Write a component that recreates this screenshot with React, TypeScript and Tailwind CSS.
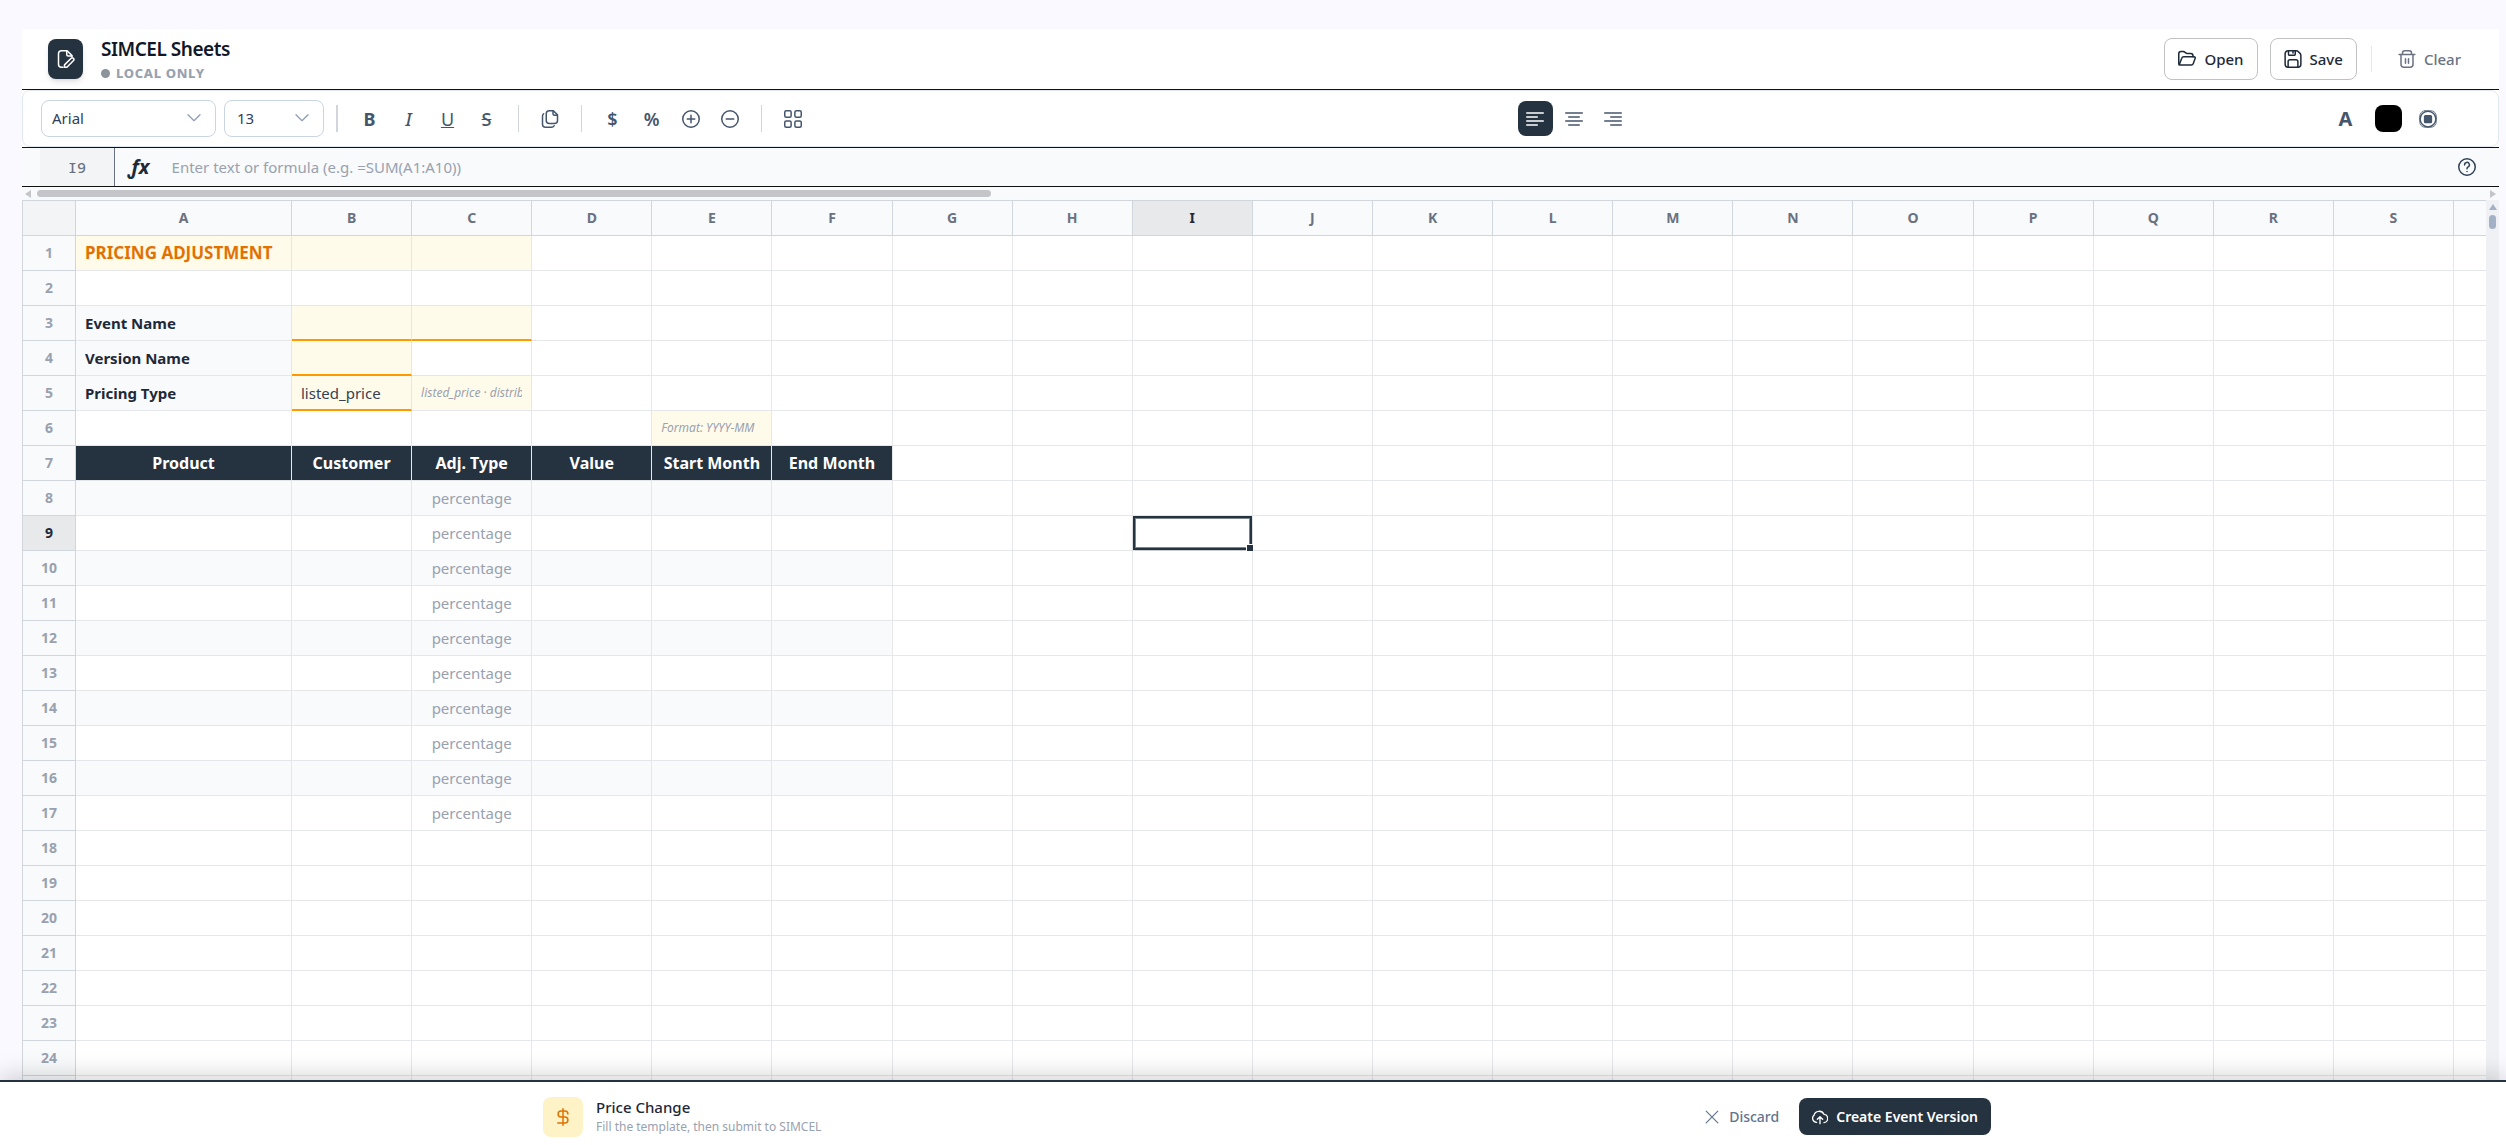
import React from 'react';

interface IconProps {
  className?: string;
  children: React.ReactNode;
}

const Icon: React.FC<IconProps> = ({ className = 'size-[18px]', children }) => (
  <svg
    viewBox="0 0 24 24"
    fill="none"
    stroke="currentColor"
    strokeWidth="2"
    strokeLinecap="round"
    strokeLinejoin="round"
    className={`shrink-0 ${className}`}
    aria-hidden="true"
  >
    {children}
  </svg>
);

const FileEditIcon = () => (
  <Icon>
    <path d="M8 23H6a4 4 0 0 1-4-4V5a4 4 0 0 1 4-4h7.5L20 7.5V9" />
    <path d="M13 1.5V6a2 2 0 0 0 2 2h4.5" />
    <path d="M10 23v-3.2l8.9-8.9a2.3 2.3 0 0 1 3.2 3.2L13.2 23z" />
  </Icon>
);

const FolderOpenIcon = () => (
  <Icon>
    <path d="M1 18V5a3 3 0 0 1 3-3h3.5l4 2.5H17a3 3 0 0 1 3 3V9" />
    <path d="M1.5 20 5 11a3 3 0 0 1 2.7-2H21.5a1.5 1.5 0 0 1 1.4 2l-2.5 7a3 3 0 0 1-2.8 2H2.5A1.5 1.5 0 0 1 1 18.5" />
  </Icon>
);

const SaveIcon = () => (
  <Icon>
    <path d="M1.5 5a4 4 0 0 1 4-4h10.8a4 4 0 0 1 2.8 1.2l2.3 2.3a4 4 0 0 1 1.1 2.7V19a4 4 0 0 1-4 4h-13a4 4 0 0 1-4-4z" />
    <path d="M6 1v4.5A1.5 1.5 0 0 0 7.5 7h6A1.5 1.5 0 0 0 15 5.5V1M12 2v2" />
    <path d="M5.5 23v-7.5A2.5 2.5 0 0 1 8 13h8a2.5 2.5 0 0 1 2.5 2.5V23" />
  </Icon>
);

const TrashIcon = () => (
  <Icon>
    <path d="M1.5 6h21M4 6v13a4 4 0 0 0 4 4h8a4 4 0 0 0 4-4V6M6 6V4a3 3 0 0 1 3-3h6a3 3 0 0 1 3 3v2M10 11.5v6M14 11.5v6" />
  </Icon>
);

const CopyIcon = () => (
  <Icon>
    <path d="M11 1h5.5L22 6.5V14a4 4 0 0 1-4 4h-7a4 4 0 0 1-4-4V5a4 4 0 0 1 4-4z" />
    <path d="M16 1.5V5a2 2 0 0 0 2 2h3.5M3.5 5A4 4 0 0 0 2 8v11a4 4 0 0 0 4 4h8a4 4 0 0 0 3.5-2" />
  </Icon>
);

const PlusCircleIcon = () => (
  <Icon>
    <circle cx="12" cy="12" r="11" />
    <path d="M12 7v10M7 12h10" />
  </Icon>
);

const MinusCircleIcon = () => (
  <Icon>
    <circle cx="12" cy="12" r="11" />
    <path d="M7 12h10" />
  </Icon>
);

const AppsIcon = () => (
  <Icon>
    <rect x="1" y="1" width="8.5" height="8.5" rx="2" />
    <rect x="14.5" y="1" width="8.5" height="8.5" rx="2" />
    <rect x="1" y="14.5" width="8.5" height="8.5" rx="2" />
    <rect x="14.5" y="14.5" width="8.5" height="8.5" rx="2" />
  </Icon>
);

const AlignLeftIcon = () => (
  <Icon>
    <path d="M1 4h22M1 9.3h14M1 14.6h22M1 20h14" />
  </Icon>
);

const AlignCenterIcon = () => (
  <Icon>
    <path d="M1 4h22M5 9.3h14M1 14.6h22M5 20h14" />
  </Icon>
);

const AlignRightIcon = () => (
  <Icon>
    <path d="M1 4h22M9 9.3h14M1 14.6h22M9 20h14" />
  </Icon>
);

const FillIcon = () => (
  <Icon>
    <rect x="1" y="1" width="22" height="22" rx="7" strokeWidth="1" />
    <circle cx="12" cy="12" r="10.5" />
    <rect x="7.5" y="7.5" width="9" height="9" rx="1" fill="currentColor" />
  </Icon>
);

const HelpIcon = () => (
  <Icon>
    <circle cx="12" cy="12" r="11" />
    <path d="M8.8 9.2a3.2 3.2 0 1 1 4.8 2.6c-1 .6-1.6 1.2-1.6 2.5M12 18v.1" />
  </Icon>
);

const ChevronIcon = () => (
  <Icon className="pointer-events-none absolute top-2.5 right-3.5 size-4 text-slate-400">
    <path d="M3 7l9 9 9-9" />
  </Icon>
);

const CloseIcon = () => (
  <Icon className="size-3.5">
    <path d="M2 2l20 20M22 2 2 22" />
  </Icon>
);

const DollarIcon = () => (
  <Icon>
    <path d="M12 1v22M18.5 8a4 4 0 0 0-4-4h-5a4 4 0 0 0 0 8h5a4 4 0 0 1 0 8H5" />
  </Icon>
);

const CloudUploadIcon = () => (
  <Icon className="size-4">
    <path d="M7 20a6 6 0 0 1-4-10.5A8 8 0 0 1 18 8a6.3 6.3 0 0 1 0 12.5" />
    <path d="M12 22V12M8 15.5l4-4 4 4" />
  </Icon>
);

const Divider = () => <span className="mr-[9px] ml-2.5 h-[27px] w-px bg-gray-300" />;

interface ToolButtonProps {
  label: string;
  active?: boolean;
  children: React.ReactNode;
}

const ToolButton: React.FC<ToolButtonProps> = ({ label, active, children }) => (
  <button
    type="button"
    aria-label={label}
    className={`flex size-[35px] items-center justify-center rounded-lg text-lg ${
      active ? 'bg-[#253341] text-white' : 'text-slate-600'
    }`}
  >
    {children}
  </button>
);

const columns = 'ABCDEFGHIJKLMNOPQRS'.split('');
const rows = Array.from({ length: 25 }, (_, i) => i + 1);

const selected = { col: 'I', row: 9 };

const label = 'bg-slate-50 font-bold text-gray-800';
const input = 'bg-amber-50 border-b-2 border-b-amber-500';
const head = 'bg-[#253341] text-center text-base font-bold text-white';
const hint = 'bg-amber-50 text-xs text-gray-400 italic';

interface Cell {
  text?: string;
  style: string;
}

const cells: Record<string, Cell> = {
  A1: { text: 'PRICING ADJUSTMENT', style: 'bg-amber-50 text-[17px] font-bold text-amber-600' },
  B1: { style: 'bg-amber-50' },
  C1: { style: 'bg-amber-50' },
  A3: { text: 'Event Name', style: label },
  B3: { style: input },
  C3: { style: input },
  A4: { text: 'Version Name', style: label },
  B4: { style: input },
  A5: { text: 'Pricing Type', style: label },
  B5: { text: 'listed_price', style: input },
  C5: { text: 'listed_price · distributor_price', style: hint },
  E6: { text: 'Format: YYYY-MM', style: hint },
  A7: { text: 'Product', style: head },
  B7: { text: 'Customer', style: head },
  C7: { text: 'Adj. Type', style: head },
  D7: { text: 'Value', style: head },
  E7: { text: 'Start Month', style: head },
  F7: { text: 'End Month', style: head }
};

const getCell = (col: string, row: number): Cell => {
  const cell = cells[`${col}${row}`];
  if (cell) return cell;
  if (row >= 8 && row <= 17 && col <= 'F') {
    const stripe = row % 2 === 0 ? 'bg-slate-50' : 'bg-white';
    return col === 'C'
      ? { text: 'percentage', style: `${stripe} text-center text-gray-400` }
      : { style: stripe };
  }
  return { style: 'bg-white' };
};

const Header = () => (
  <header className="flex h-[61px] shrink-0 items-center justify-between border-b border-[#111111] bg-white pr-6 pl-[26px]">
    <div className="flex items-center gap-[18px]">
      <div className="flex h-10 w-[35px] items-center justify-center rounded-lg bg-[#253341] text-white shadow-md">
        <FileEditIcon />
      </div>
      <div className="pt-1">
        <h1 className="text-[19px] leading-6 font-semibold tracking-tight text-gray-900">SIMCEL Sheets</h1>
        <p className="flex items-center gap-1.5 text-[13px] leading-6 font-extrabold tracking-wider text-gray-400">
          <span className="size-[9px] rounded-full bg-[#8b9499]" />
          LOCAL ONLY
        </p>
      </div>
    </div>
    <div className="flex items-center text-[15px] font-medium text-gray-800">
      <button type="button" className="flex h-[42px] items-center gap-2 rounded-lg border border-[#bfc1c5] px-[13px]">
        <FolderOpenIcon />
        Open
      </button>
      <button type="button" className="ml-3 flex h-[42px] items-center gap-2 rounded-lg border border-[#bfc1c5] px-[13px]">
        <SaveIcon />
        Save
      </button>
      <span className="ml-3.5 h-[26px] w-px bg-gray-200" />
      <button type="button" className="ml-3 flex h-[42px] items-center gap-2 px-3.5 text-gray-500">
        <TrashIcon />
        Clear
      </button>
    </div>
  </header>
);

const Toolbar = () => (
  <div className="h-[58px] shrink-0 border-b border-[#111111] bg-white">
    <div className="flex h-full items-center justify-between rounded-lg border border-slate-200 pr-[53px] pl-[18px]">
      <div className="flex items-center gap-1">
        <div className="relative mr-1 w-[175px]">
          <select
            aria-label="Font"
            className="h-[37px] w-full appearance-none rounded-lg border border-slate-300 bg-white px-2.5 text-[15px] text-slate-700"
          >
            <option>Arial</option>
          </select>
          <ChevronIcon />
        </div>
        <div className="relative w-[100px]">
          <select
            aria-label="Font size"
            className="h-[37px] w-full appearance-none rounded-lg border border-slate-300 bg-white px-3 text-[15px] text-slate-700"
          >
            <option>13</option>
          </select>
          <ChevronIcon />
        </div>
        <span className="mr-2.5 ml-2 h-[27px] w-0.5 bg-gray-300" />
        <ToolButton label="Bold">
          <span className="font-bold">B</span>
        </ToolButton>
        <ToolButton label="Italic">
          <span className="font-medium italic">I</span>
        </ToolButton>
        <ToolButton label="Underline">
          <span className="underline">U</span>
        </ToolButton>
        <ToolButton label="Strikethrough">
          <span className="font-medium line-through">S</span>
        </ToolButton>
        <Divider />
        <ToolButton label="Copy">
          <CopyIcon />
        </ToolButton>
        <Divider />
        <ToolButton label="Currency">
          <span className="font-semibold">$</span>
        </ToolButton>
        <ToolButton label="Percent">
          <span className="font-semibold">%</span>
        </ToolButton>
        <ToolButton label="More decimals">
          <PlusCircleIcon />
        </ToolButton>
        <ToolButton label="Fewer decimals">
          <MinusCircleIcon />
        </ToolButton>
        <Divider />
        <ToolButton label="Merge cells">
          <AppsIcon />
        </ToolButton>
      </div>
      <div className="ml-2.5 flex items-center gap-1">
        <ToolButton label="Align left" active>
          <AlignLeftIcon />
        </ToolButton>
        <ToolButton label="Align center">
          <AlignCenterIcon />
        </ToolButton>
        <ToolButton label="Align right">
          <AlignRightIcon />
        </ToolButton>
      </div>
      <div className="flex items-center gap-2">
        <ToolButton label="Text color">
          <span className="text-xl font-bold">A</span>
        </ToolButton>
        <button type="button" aria-label="Color swatch" className="ml-1 size-[27px] rounded-lg bg-black" />
        <ToolButton label="Fill color">
          <FillIcon />
        </ToolButton>
      </div>
    </div>
  </div>
);

const FormulaBar = () => (
  <div className="flex h-[39px] shrink-0 items-center border-b border-[#111111] bg-slate-50 pr-[23px] pl-[18px]">
    <div className="flex h-full w-[75px] items-center justify-center border-r border-gray-500 bg-gray-100 font-['Noto_Sans_Mono','DejaVu_Sans_Mono',monospace] text-[15px] font-medium text-gray-500">
      I9
    </div>
    <span className="ml-3.5 text-xl font-bold text-gray-800 italic">ƒx</span>
    <input
      type="text"
      aria-label="Formula"
      placeholder="Enter text or formula (e.g. =SUM(A1:A10))"
      className="ml-[22px] h-full flex-1 bg-transparent text-[15px] outline-none placeholder:text-gray-400"
    />
    <button type="button" aria-label="Help" className="text-slate-700">
      <HelpIcon />
    </button>
  </div>
);

const HorizontalScroll = () => (
  <div className="flex h-[13px] shrink-0 items-center justify-between bg-slate-50 px-[3px]">
    <svg viewBox="0 0 6 8" className="h-2 w-1.5 fill-[#c4c5c8]">
      <path d="M6 0v8L0 4z" />
    </svg>
    <div className="mx-1.5 flex-1">
      <div className="h-[7px] w-[39%] rounded-full bg-[#c4c5c8]" />
    </div>
    <svg viewBox="0 0 6 8" className="h-2 w-1.5 fill-[#c4c5c8]">
      <path d="M0 0v8l6-4z" />
    </svg>
  </div>
);

const VerticalScroll = () => (
  <div className="flex w-[13px] shrink-0 flex-col items-center gap-[5px] bg-[#eff1f4] pt-1">
    <svg viewBox="0 0 8 6" className="h-1.5 w-2 fill-[#a3b1c6]">
      <path d="M4 0l4 6H0z" />
    </svg>
    <div className="h-3.5 w-[7px] rounded-full bg-[#a3b1c6]" />
  </div>
);

const Grid = () => (
  <table className="w-full flex-1 table-fixed border-separate border-spacing-0 text-[15px] text-gray-700">
    <colgroup>
      <col className="w-[54px]" />
      <col className="w-[216px]" />
      {columns.slice(1).map((col) => (
        <col key={col} />
      ))}
      <col className="w-8" />
    </colgroup>
    <thead>
      <tr className="h-9">
        <th className="border border-gray-300 bg-gray-100" />
        {columns.map((col) => (
          <th
            key={col}
            scope="col"
            className={`border-t border-r border-b border-gray-300 p-0 text-sm font-bold ${
              col === selected.col ? 'bg-[#e8e9eb] text-gray-800' : 'bg-slate-50 text-gray-500'
            }`}
          >
            {col}
          </th>
        ))}
        <th className="border-t border-b border-gray-300 bg-slate-50" />
      </tr>
    </thead>
    <tbody>
      {rows.map((row) => (
        <tr key={row} className="h-[35px]">
          <th
            scope="row"
            className={`border-r border-b border-l border-gray-300 p-0 text-sm font-bold ${
              row === selected.row ? 'bg-[#e8e9eb] text-gray-800' : 'bg-slate-50 text-gray-400'
            }`}
          >
            {row}
          </th>
          {columns.map((col) => {
            const cell = getCell(col, row);
            const isSelected = col === selected.col && row === selected.row;
            return (
              <td key={col} className={`relative border-r border-b border-gray-200 px-[9px] py-0 ${cell.style}`}>
                {cell.text && <div className="overflow-hidden leading-7 whitespace-nowrap">{cell.text}</div>}
                {isSelected && (
                  <div className="absolute inset-0 border-2 border-[#253341] shadow-md inset-ring inset-ring-[#253341]/60">
                    <span className="absolute -right-1 -bottom-1 size-2 border border-white bg-[#253341]" />
                  </div>
                )}
              </td>
            );
          })}
          <td className="border-b border-gray-200 bg-white p-0" />
        </tr>
      ))}
    </tbody>
  </table>
);

const ActionBar = () => (
  <footer className="z-10 h-[65px] shrink-0 border-t-2 border-[#253341] bg-white shadow-[0_-4px_24px_rgba(0,0,0,0.18)]">
    <div className="mx-auto flex h-full max-w-[1476px] items-center justify-between pt-1.5 pl-7">
      <div className="flex items-center gap-[13px]">
        <div className="flex size-10 items-center justify-center rounded-lg bg-amber-100 text-amber-600">
          <DollarIcon />
        </div>
        <div>
          <p className="text-[15px] leading-5 font-medium text-gray-800">Price Change</p>
          <p className="text-xs leading-5 text-gray-400">Fill the template, then submit to SIMCEL</p>
        </div>
      </div>
      <div className="flex items-center text-sm">
        <button type="button" className="flex h-[37px] items-center gap-2.5 px-5 font-medium text-slate-500">
          <CloseIcon />
          Discard
        </button>
        <button
          type="button"
          className="flex h-[37px] items-center gap-2 rounded-lg bg-[#253341] px-[13px] font-semibold text-white"
        >
          <CloudUploadIcon />
          Create Event Version
        </button>
      </div>
    </div>
  </footer>
);

const App: React.FC = () => {
  return (
    <div className="flex h-screen flex-col overflow-hidden bg-[#f9f9ff] font-['Noto_Sans',sans-serif]">
      <main className="flex min-h-0 flex-1 flex-col overflow-hidden pt-[29px] pr-[7px] pl-[22px]">
        <Header />
        <Toolbar />
        <FormulaBar />
        <HorizontalScroll />
        <div className="flex min-h-0 flex-1 items-start overflow-hidden">
          <Grid />
          <div className="flex h-full">
            <VerticalScroll />
          </div>
        </div>
      </main>
      <ActionBar />
    </div>
  );
};

export default App;
